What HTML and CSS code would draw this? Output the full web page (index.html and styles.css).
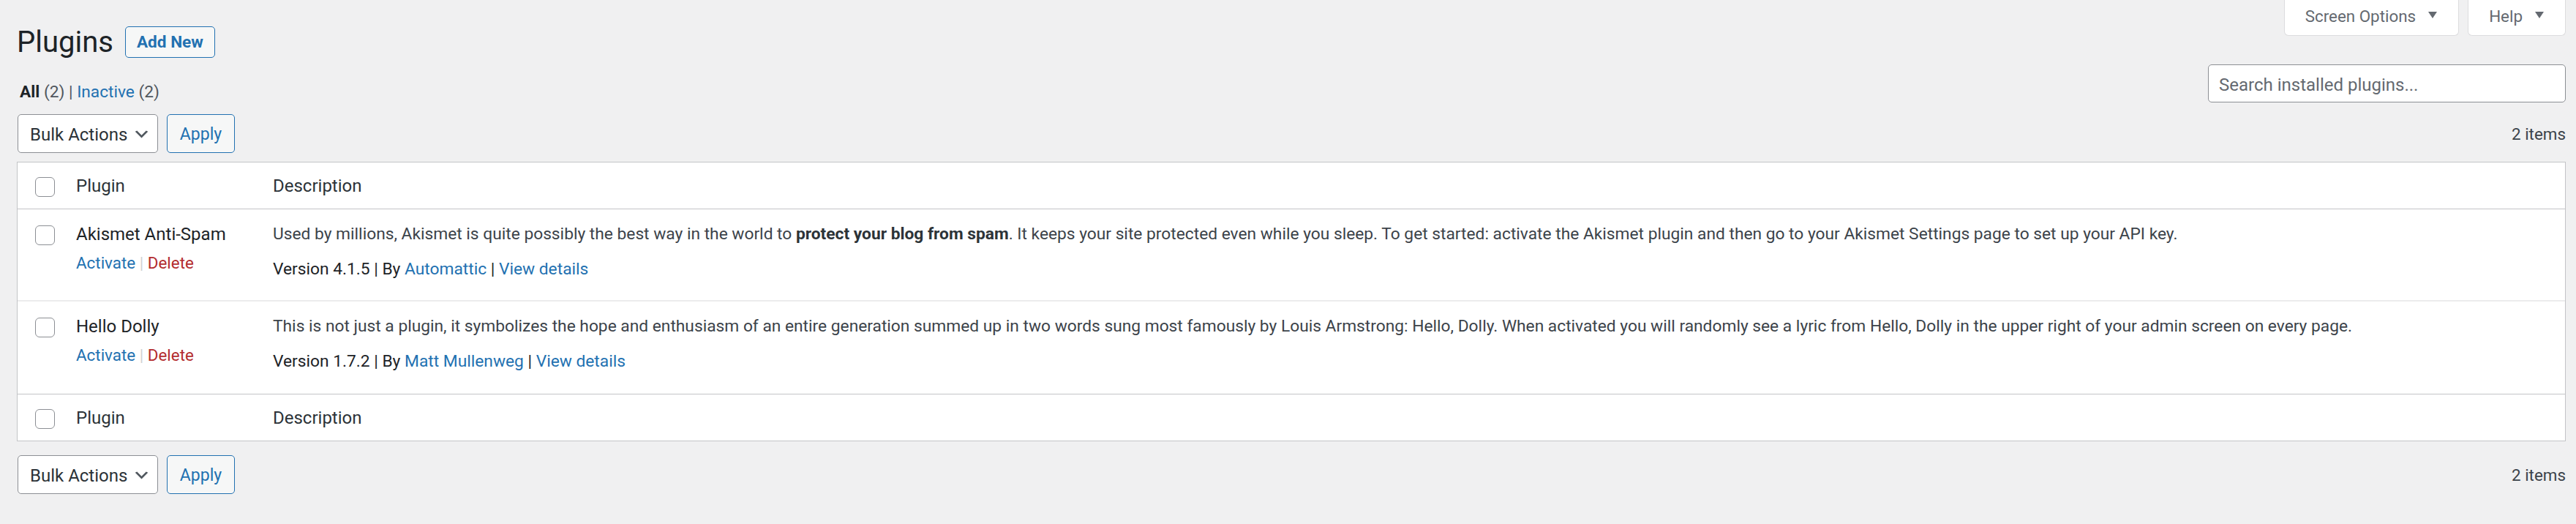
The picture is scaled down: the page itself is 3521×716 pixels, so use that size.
FILE: index.html
```html
<!DOCTYPE html>
<html lang="en">
<head>
<meta charset="utf-8">
<title>Plugins</title>
<link rel="stylesheet" href="styles.css">
</head>
<body>
<div class="page">
  <div class="head-row">
    <div class="title-row">
      <h1 class="page-title">Plugins</h1>
      <a class="add-new" href="#">Add New</a>
    </div>
    <div class="meta-links">
      <button class="meta-tab" type="button">Screen Options<svg class="caret" viewBox="0 0 12 9" width="12" height="9"><polygon points="0,0 12,0 6,9"/></svg></button>
      <button class="meta-tab" type="button">Help<svg class="caret" viewBox="0 0 12 9" width="12" height="9"><polygon points="0,0 12,0 6,9"/></svg></button>
    </div>
  </div>

  <div class="filter-row">
    <ul class="subsubsub">
      <li><a class="current" href="#">All <span class="count">(2)</span></a> <span class="bar">|</span> </li>
      <li><a href="#">Inactive <span class="count">(2)</span></a></li>
    </ul>
    <input class="search" type="search" placeholder="Search installed plugins...">
  </div>

  <div class="tablenav">
    <div class="bulk">
      <div class="select"><span>Bulk Actions</span><svg class="chev" viewBox="0 0 20 20" width="25" height="25"><path d="M5 6l5 5 5-5 2 1-7 7-7-7 2-1z"/></svg></div>
      <button class="apply" type="button">Apply</button>
    </div>
    <div class="count-items">2 items</div>
  </div>

  <table class="plugins">
    <thead>
      <tr>
        <th class="col-cb"><span class="cb"></span></th>
        <th class="col-name">Plugin</th>
        <th class="col-desc">Description</th>
      </tr>
    </thead>
    <tbody>
      <tr>
        <td class="col-cb"><span class="cb"></span></td>
        <td class="col-name">
          <div class="plugin-title">Akismet Anti-Spam</div>
          <div class="row-actions"><a href="#">Activate</a> <span class="sep">|</span> <a class="delete" href="#">Delete</a></div>
        </td>
        <td class="col-desc">
          <p class="desc">Used by millions, Akismet is quite possibly the best way in the world to <strong>protect your blog from spam</strong>. It keeps your site protected even while you sleep. To get started: activate the Akismet plugin and then go to your Akismet Settings page to set up your API key.</p>
          <div class="meta">Version 4.1.5 | By <a href="#">Automattic</a> | <a href="#">View details</a></div>
        </td>
      </tr>
      <tr>
        <td class="col-cb"><span class="cb"></span></td>
        <td class="col-name">
          <div class="plugin-title">Hello Dolly</div>
          <div class="row-actions"><a href="#">Activate</a> <span class="sep">|</span> <a class="delete" href="#">Delete</a></div>
        </td>
        <td class="col-desc">
          <p class="desc">This is not just a plugin, it symbolizes the hope and enthusiasm of an entire generation summed up in two words sung most famously by Louis Armstrong: Hello, Dolly. When activated you will randomly see a lyric from Hello, Dolly in the upper right of your admin screen on every page.</p>
          <div class="meta">Version 1.7.2 | By <a href="#">Matt Mullenweg</a> | <a href="#">View details</a></div>
        </td>
      </tr>
    </tbody>
    <tfoot>
      <tr>
        <th class="col-cb"><span class="cb"></span></th>
        <th class="col-name">Plugin</th>
        <th class="col-desc">Description</th>
      </tr>
    </tfoot>
  </table>

  <div class="tablenav bottom">
    <div class="bulk">
      <div class="select"><span>Bulk Actions</span><svg class="chev" viewBox="0 0 20 20" width="25" height="25"><path d="M5 6l5 5 5-5 2 1-7 7-7-7 2-1z"/></svg></div>
      <button class="apply" type="button">Apply</button>
    </div>
    <div class="count-items">2 items</div>
  </div>
</div>
</body>
</html>
```

FILE: styles.css
```css
* { box-sizing: border-box; }

html, body {
  margin: 0;
  padding: 0;
  background: #f0f0f1;
}

body {
  font-family: Roboto, "Liberation Sans", sans-serif;
  font-size: 22.4px;
  color: #3c434a;
}

a { color: #2271b1; text-decoration: none; }

.page {
  padding: 0 14px 0 23px;
}

/* header */
.head-row {
  display: flex;
  justify-content: space-between;
  align-items: flex-start;
}

.title-row {
  display: flex;
  align-items: center;
  margin-top: 32px;
}

.page-title {
  margin: 0;
  font-size: 40px;
  line-height: 51px;
  font-weight: 400;
  color: #1d2327;
}

.add-new {
  margin-left: 16px;
  padding: 7px 15px;
  line-height: 27px;
  font-size: 22.6px;
  font-weight: 700;
  color: #2271b1;
  background: #f6f7f7;
  border: 1px solid #2271b1;
  border-radius: 5px;
}

.meta-links {
  display: flex;
  gap: 12px;
}

.meta-tab {
  display: flex;
  align-items: flex-start;
  height: 49px;
  padding: 9px 29px 0 28px;
  font-family: inherit;
  font-size: 22.4px;
  line-height: 26px;
  color: #646970;
  background: #fff;
  border: 1px solid #dcdcde;
  border-top: none;
  border-radius: 0 0 6px 6px;
}

.caret {
  margin: 7px 0 0 17px;
  fill: #646970;
}

/* filters */
.filter-row {
  display: flex;
  justify-content: space-between;
  align-items: flex-start;
  margin-top: 5px;
}

.subsubsub {
  list-style: none;
  margin: 0;
  padding: 25px 0 0 4px;
  display: flex;
  font-size: 22.7px;
  line-height: 26px;
  white-space: pre;
}

.subsubsub li { display: inline; }
.subsubsub .current { color: #1d2327; font-weight: 700; }
.subsubsub .current .count { font-weight: 400; }
.subsubsub .count { color: #50575e; }
.subsubsub .bar { color: #50575e; }

.search {
  width: 489px;
  height: 52px;
  margin: 0;
  padding: 4px 14px 0;
  font-family: inherit;
  font-size: 24px;
  color: #2c3338;
  background: #fff;
  border: 1px solid #8c8f94;
  border-radius: 5px;
  outline: none;
}

.search::placeholder { color: #646970; }

/* tablenav */
.tablenav {
  display: flex;
  justify-content: space-between;
  align-items: center;
  height: 53px;
  margin: 16px 0 12px;
}

.tablenav.bottom { margin: 19px 0 0; }

.bulk {
  display: flex;
  gap: 12px;
  height: 53px;
}

.select {
  display: flex;
  align-items: center;
  justify-content: space-between;
  width: 192px;
  height: 53px;
  margin-left: 1px;
  padding: 3px 9px 0 16px;
  font-size: 24px;
  color: #2c3338;
  background: #fff;
  border: 1px solid #8c8f94;
  border-radius: 5px;
}

.chev { fill: #50575e; margin-top: -2px; }

.apply {
  width: 93px;
  height: 53px;
  padding: 2px 0 0;
  font-family: inherit;
  font-size: 23px;
  color: #2271b1;
  background: #f6f7f7;
  border: 1px solid #2271b1;
  border-radius: 5px;
}

.count-items {
  line-height: 26px;
  color: #3c434a;
}

/* table */
.plugins {
  width: 100%;
  table-layout: fixed;
  border-collapse: separate;
  border-spacing: 0;
  background: #fff;
  border: 1px solid #c3c4c7;
}

.plugins th, .plugins td {
  vertical-align: top;
  text-align: left;
}

.plugins th {
  padding: 15px 17px 14px;
  font-size: 24px;
  line-height: 34px;
  font-weight: 400;
  color: #2c3338;
}

.plugins thead th { border-bottom: 1px solid #c3c4c7; }
.plugins tfoot th { border-top: 1px solid #c3c4c7; }

.plugins td {
  padding: 17px 17px 25px;
  border-bottom: 2px solid #ececed;
}

.plugins tbody tr:last-child td { border-bottom-color: #fff; }

.plugins .col-cb {
  width: 63px;
  padding: 20px 0 0 24px;
}

.plugins td.col-cb { padding-top: 22px; }

.plugins .col-name { width: 269px; }

.cb {
  display: block;
  width: 27px;
  height: 27px;
  background: #fff;
  border: 1px solid #8c8f94;
  border-radius: 6px;
}

.plugin-title {
  font-size: 24px;
  line-height: 34px;
  color: #1d2327;
  white-space: nowrap;
}

.row-actions {
  padding-top: 6px;
  line-height: 32px;
  white-space: pre;
}

.row-actions .sep { color: #d0d1d3; }
.row-actions .delete { color: #b32d2e; }

.desc {
  margin: 0 0 14px;
  font-size: 22.75px;
  line-height: 34px;
  color: #3c434a;
  white-space: nowrap;
}

.desc strong { font-weight: 700; color: #2c3338; }

.meta {
  font-size: 22.75px;
  line-height: 34px;
  color: #1d2327;
  white-space: nowrap;
}
```
